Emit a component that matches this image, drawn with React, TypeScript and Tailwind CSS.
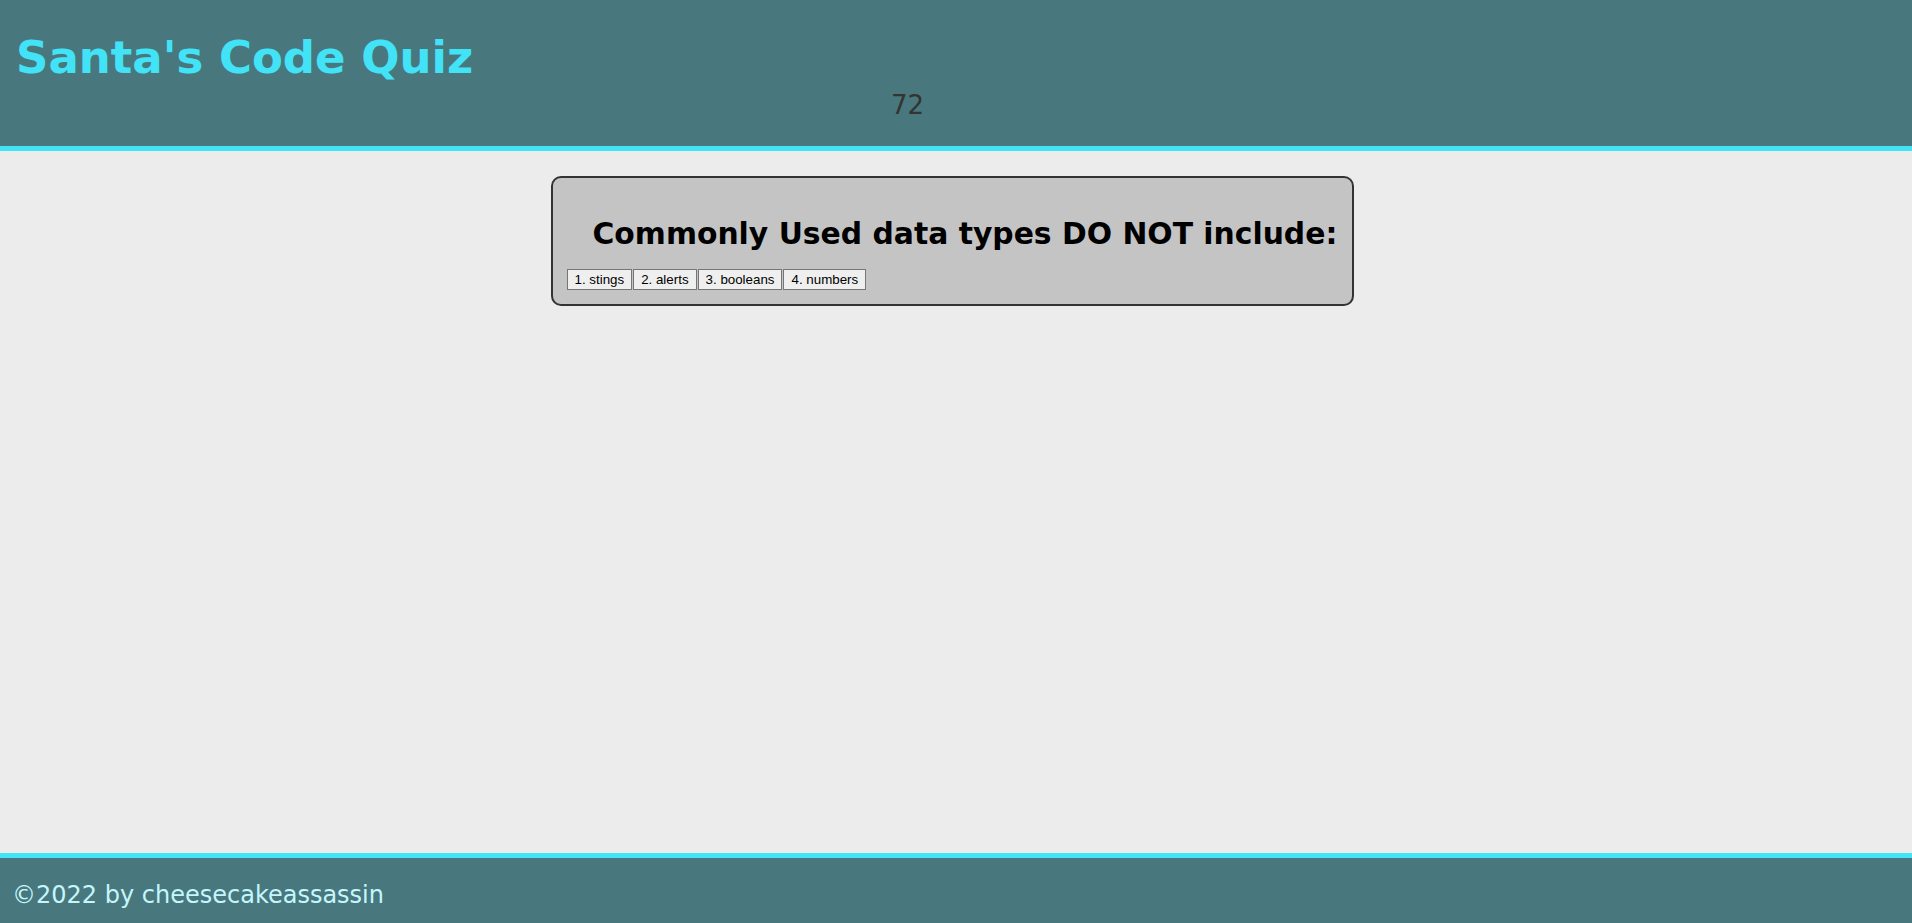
const answers = ["1. stings", "2. alerts", "3. booleans", "4. numbers"];

export default function App() {
  return (
    <div className="flex min-h-screen flex-col bg-[#ececec] font-['DejaVu_Sans',sans-serif]">
      {/* header */}
      <header className="h-[151px] border-b-[5px] border-[#42e3f7] bg-[#48787e]">
        <h1 className="pl-[16px] pt-[35px] text-[45px] font-bold leading-none text-[#42e3f7]">
          Santa's Code Quiz
        </h1>
        <div className="pl-[891px] pt-[12px] text-[26px] leading-none text-[#333333]">
          72
        </div>
      </header>

      {/* quiz card */}
      <main className="flex flex-1 justify-center pr-[8px] pt-[25px]">
        <div className="h-[130px] w-[803px] rounded-[10px] border-2 border-[#333333] bg-[#c4c4c4]">
          <h2 className="pl-[40px] pt-[41px] text-[29.8px] font-bold leading-none text-black">
            Commonly Used data types DO NOT include:
          </h2>
          <div className="mt-[20px] flex gap-[1px] pl-[14px]">
            {answers.map((a) => (
              <button
                key={a}
                className="h-[21px] border border-[#767676] bg-[#efefef] px-[7px] font-['Liberation_Sans',Arial,sans-serif] text-[13.33px] leading-none text-black"
              >
                {a}
              </button>
            ))}
          </div>
        </div>
      </main>

      {/* footer */}
      <footer className="h-[70px] border-t-[5px] border-[#42e3f7] bg-[#48787e] pl-[12px] pt-[25px] text-[24px] leading-none text-[#c4f6fb]">
        ©2022 by cheesecakeassassin
      </footer>
    </div>
  );
}
